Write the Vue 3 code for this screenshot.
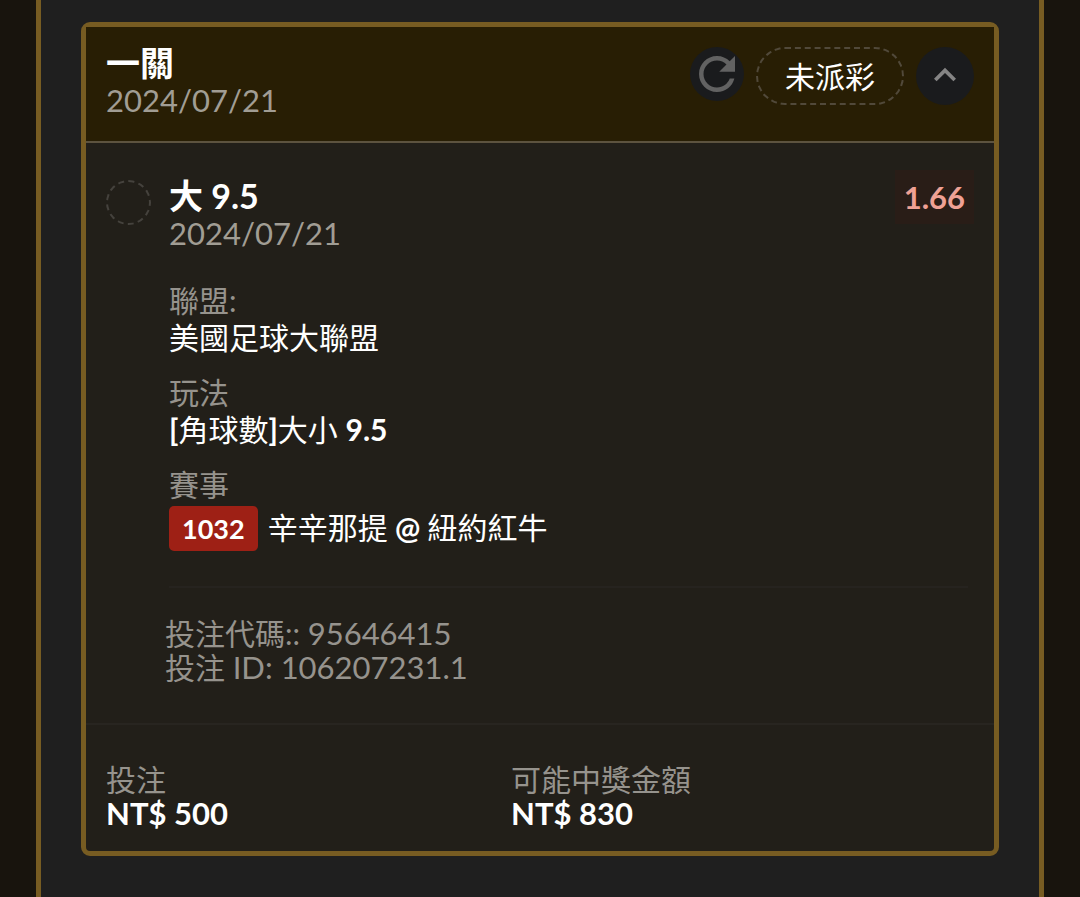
<script setup>
import { ref } from 'vue'

const open = ref(true)

const details = [
  { label: '聯盟:', parts: [{ text: '美國足球大聯盟' }] },
  { label: '玩法', parts: [{ text: '[', strong: true }, { text: '角球數' }, { text: ']', strong: true }, { text: '大小 ' }, { text: '9.5', strong: true }] },
  { label: '賽事', code: '1032', parts: [{ text: '辛辛那提' }, { text: ' @ ', strong: true }, { text: '紐約紅牛' }] },
]

const totals = [
  { label: '投注', value: 'NT$ 500' },
  { label: '可能中獎金額', value: 'NT$ 830' },
]
</script>

<template>
  <main class="panel">
    <article class="card">
      <header class="head">
        <div>
          <h1 class="title">一關</h1>
          <time class="date" datetime="2024-07-21">2024/07/21</time>
        </div>
        <div class="actions">
          <button class="refresh" type="button" aria-label="重新整理">
            <svg viewBox="0 0 24 24" width="54" height="54" aria-hidden="true">
              <path d="M17.65 6.35C16.2 4.9 14.21 4 12 4c-4.42 0-7.99 3.58-7.99 8s3.57 8 7.99 8c3.73 0 6.84-2.55 7.73-6h-2.08c-.82 2.33-3.04 4-5.65 4-3.31 0-6-2.69-6-6s2.69-6 6-6c1.66 0 3.14.69 4.22 1.78L13 11h7V4l-2.35 2.35z" fill="#626262" />
            </svg>
          </button>
          <span class="status">未派彩</span>
          <button class="toggle" type="button" aria-label="收合" :aria-expanded="open" @click="open = !open">
            <svg viewBox="0 0.5 24 24" width="44" height="44" aria-hidden="true">
              <path d="M12 8l-6 6 1.41 1.41L12 10.83l4.59 4.58L18 14z" fill="#858585" />
            </svg>
          </button>
        </div>
      </header>

      <section v-if="open" class="bet">
        <span class="ring"></span>
        <div class="bet-main">
          <div class="bet-top">
            <div>
              <h2 class="title">大 9.5</h2>
              <time class="date" datetime="2024-07-21">2024/07/21</time>
            </div>
            <span class="odds">1.66</span>
          </div>
          <dl class="details">
            <div v-for="d in details" :key="d.label" class="detail">
              <dt>{{ d.label }}</dt>
              <dd :class="{ match: d.code }">
                <span v-if="d.code" class="code">{{ d.code }}</span>
                <span><span v-for="(p, i) in d.parts" :key="i" :class="{ strong: p.strong }">{{ p.text }}</span></span>
              </dd>
            </div>
          </dl>
          <div class="ids">
            <p>投注代碼:: <span class="num">95646415</span></p>
            <p>投注 <span class="num">ID: 106207231.1</span></p>
          </div>
        </div>
      </section>

      <footer class="totals">
        <div v-for="t in totals" :key="t.label">
          <div class="total-label">{{ t.label }}</div>
          <div class="total-value">{{ t.value }}</div>
        </div>
      </footer>
    </article>
  </main>
</template>

<style>
body {
  background: #18140d;
}
</style>

<style scoped>
.panel {
  box-sizing: border-box;
  min-height: 100vh;
  margin: 0 36px;
  padding: 22px 40px 40px;
  border: solid #775c22;
  border-width: 0 5px;
  background: #1f1f1f;
  color: #fff;
  font-family: Lato, "Noto Sans CJK TC", sans-serif;
  font-size: 30px;
  line-height: 36px;
}
.card {
  border: 5px solid #775c22;
  border-radius: 9px;
  background: #221f19;
}
.head {
  display: flex;
  justify-content: space-between;
  align-items: flex-start;
  padding: 18px 20px 22px;
  border-bottom: 2px solid #5d533f;
  background: #281e04;
}
.title {
  margin: 0;
  font-size: 34px;
  line-height: 36px;
  font-weight: 700;
}
.date {
  display: block;
  color: #a19d94;
  font-size: 31px;
  line-height: 38px;
}
.actions {
  display: flex;
  align-items: flex-start;
  gap: 12px;
  padding-top: 2px;
}
.refresh,
.toggle {
  display: flex;
  align-items: center;
  justify-content: center;
  padding: 0;
  border: 0;
  border-radius: 50%;
  background: #1a1b1d;
}
.refresh {
  width: 54px;
  height: 54px;
}
.toggle {
  width: 58px;
  height: 58px;
}
.status {
  padding: 9px 27px;
  border: 2px dashed #51493a;
  border-radius: 29px;
}
.bet {
  display: flex;
  gap: 18px;
  padding: 35px 20px 0;
}
.ring {
  box-sizing: border-box;
  flex: none;
  width: 45px;
  height: 45px;
  margin-top: 2px;
  border: 2px dashed #45423d;
  border-radius: 50%;
}
.bet-main {
  flex: 1;
}
.bet-top {
  display: flex;
  justify-content: space-between;
  align-items: flex-start;
}
.odds {
  margin-top: -8px;
  padding: 0 9px;
  background: #291d17;
  color: #efa195;
  font-size: 31px;
  line-height: 54px;
  font-weight: 700;
}
.details {
  margin: 31px 6px 0 0;
  padding-bottom: 35px;
  border-bottom: 2px solid #26231f;
}
.detail + .detail {
  margin-top: 19px;
}
dt,
.total-label {
  color: #96938d;
}
dt {
  line-height: 35px;
}
dd {
  display: flex;
  align-items: flex-start;
  gap: 10px;
  margin: 0;
  line-height: 38px;
}
.match {
  padding-top: 4px;
  line-height: 42px;
}
.strong {
  font-weight: 700;
  white-space: pre;
}
.code {
  padding: 0 13px;
  border-radius: 5px;
  background: #9e2015;
  font-size: 27px;
  line-height: 45px;
  font-weight: 700;
}
.ids {
  margin-left: -4px;
  padding: 28px 0 39px;
  color: #96938d;
  line-height: 34px;
}
.ids p {
  margin: 0;
}
.num {
  display: inline-block;
  font-size: 31px;
}
.totals {
  display: grid;
  grid-template-columns: 405px 1fr;
  padding: 36px 20px 22px;
  border-top: 2px solid #282520;
}
.total-value {
  font-size: 31px;
  line-height: 32px;
  font-weight: 700;
}
</style>
